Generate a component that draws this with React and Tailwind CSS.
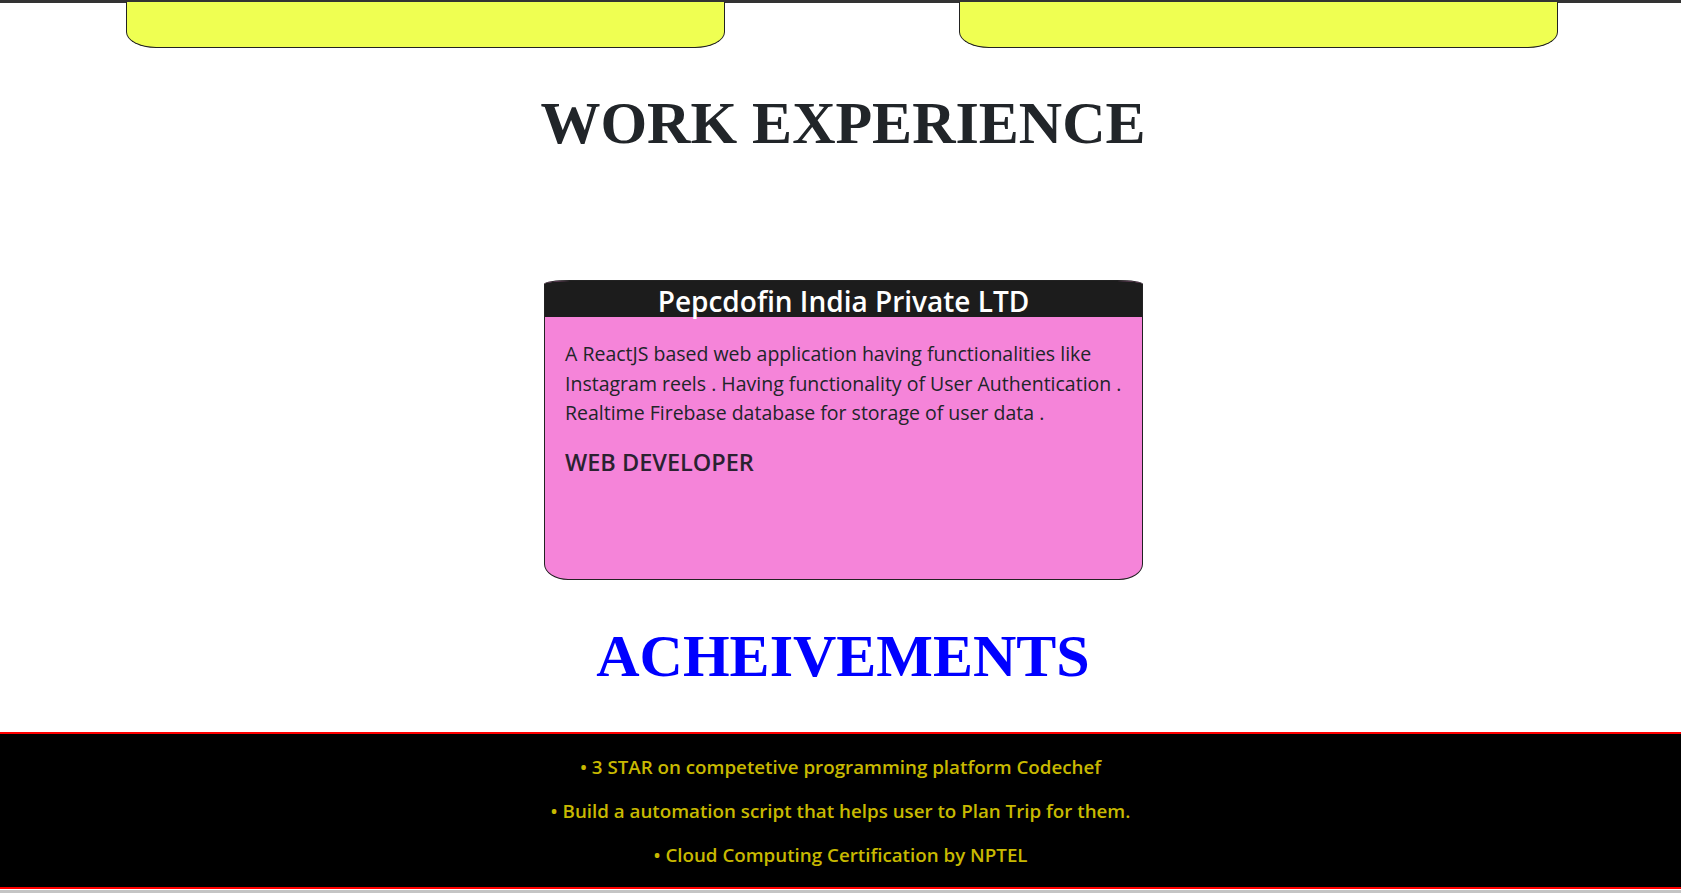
const ACHIEVEMENTS = [
  '3 STAR on competetive programming platform Codechef',
  'Build a automation script that helps user to Plan Trip for them.',
  'Cloud Computing Certification by NPTEL',
]

export default function App() {
  return (
    <div className="min-h-[893px] bg-white font-['Open_Sans',sans-serif] text-[#212529]">
      {/* strip above: end of the previous section */}
      <div className="h-[3px] bg-[#333333]" />
      <div className="flex gap-[234px] pl-[126px]">
        <div className="h-[46px] w-[599px] -mt-px rounded-b-[30px_16px] border border-t-0 border-[#222] bg-[#efff52]" />
        <div className="h-[46px] w-[599px] -mt-px rounded-b-[30px_16px] border border-t-0 border-[#222] bg-[#efff52]" />
      </div>

      <h2 className="mt-[39px] pl-[5px] text-center font-['Liberation_Serif',serif] text-[60px] font-bold leading-[72px] text-[#212529]">
        WORK EXPERIENCE
      </h2>

      {/* experience card */}
      <div className="mt-[121px] flex justify-center pl-[6px]">
        <div className="h-[300px] w-[599px] overflow-hidden rounded-t-[26px_4px] rounded-b-[24px_16px] border border-[#222] bg-[#f584d9]">
          <div className="h-[36px] bg-[#1c1c1c] pt-[2px] text-center text-[28px] font-semibold leading-[36px] text-white">
            Pepcdofin India Private LTD
          </div>
          <div className="px-[20px] pt-[22px]">
            <p className="whitespace-nowrap text-[19.5px] leading-[29.5px]">
              A ReactJS based web application having functionalities like
              <br />
              Instagram reels . Having functionality of User Authentication .
              <br />
              Realtime Firebase database for storage of user data .
            </p>
            <h4 className="mt-[20px] text-[23.5px] font-semibold leading-[29px] text-[#2a2230]">WEB DEVELOPER</h4>
          </div>
        </div>
      </div>

      <h2 className="mt-[40px] pl-[5px] text-center font-['Liberation_Serif',serif] text-[60px] font-bold leading-[72px] text-[#0000ff]">
        ACHEIVEMENTS
      </h2>

      <footer className="mt-[40px] border-y-2 border-[#ff0000] bg-black pt-[11px] pb-[10px]">
        {ACHIEVEMENTS.map((item) => (
          <p key={item} className="text-center text-[18.75px] font-semibold leading-[44px] text-[#c8b900]">
            • {item}
          </p>
        ))}
      </footer>
      <div className="h-px bg-white" />
      <div className="h-[3px] bg-[#c4c4c4]" />
    </div>
  )
}
